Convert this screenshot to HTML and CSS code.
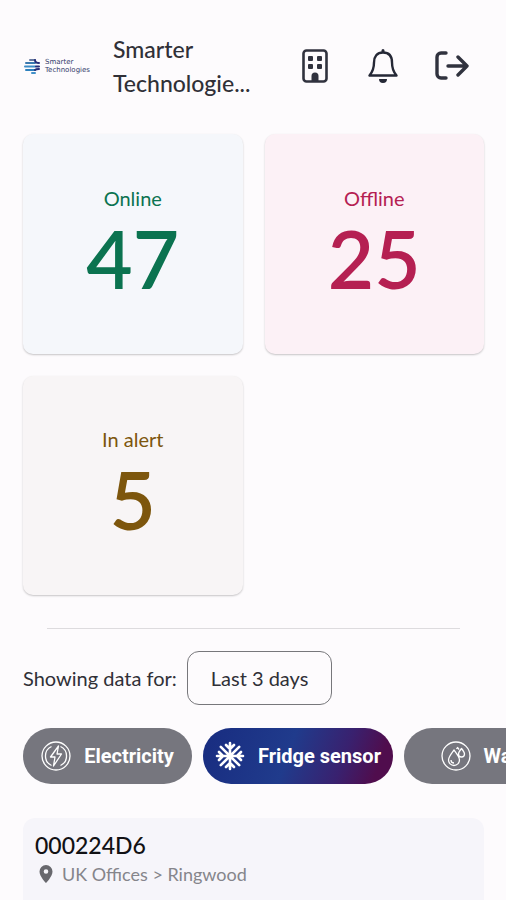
FILE: index.html
```html
<!DOCTYPE html>
<html lang="en">
<head>
<meta charset="utf-8">
<meta name="viewport" content="width=device-width, initial-scale=1">
<title>Smarter Technologies</title>
<link rel="stylesheet" href="styles.css">
</head>
<body>
<header class="topbar">
  <a class="logo" href="#" aria-label="Home">
    <svg class="logo-mark" viewBox="0 0 17 18" aria-hidden="true">
      <g fill="none" stroke-width="2" stroke-linecap="round">
        <path d="M6 3h5" stroke="#66799f"/>
        <path d="M2 6h9" stroke="#3a79ae"/>
        <path d="M1 9.500h10" stroke="#3c8bc5"/>
        <path d="M2 13h9" stroke="#2d80bd"/>
        <path d="M11 3q0 3 4 3M12 9.500h3M11 13q1-1 4-1" stroke="#252d78"/>
        <path d="M8 16h3" stroke="#4290c8"/>
      </g>
    </svg>
    <span class="logo-text">Smarter<br>Technologies</span>
  </a>
  <h1 class="title">Smarter Technologie...</h1>
  <nav class="actions">
    <button class="icon-button" type="button" aria-label="Sites">
      <svg viewBox="0 0 36 36" aria-hidden="true">
        <rect x="6.500" y="2.500" width="23" height="31" rx="3" fill="none" stroke="#30323e" stroke-width="2.600"/>
        <g fill="#30323e"><rect x="11" y="8" width="5" height="5" rx="1"/><rect x="20" y="8" width="5" height="5" rx="1"/><rect x="11" y="16" width="5" height="5" rx="1"/><rect x="20" y="16" width="5" height="5" rx="1"/><path d="M14.500 33v-5a3.500 3.500 0 0 1 7 0v5z"/></g>
      </svg>
    </button>
    <button class="icon-button" type="button" aria-label="Notifications">
      <svg viewBox="0 0 36 36" aria-hidden="true">
        <path d="M18 4.500c-6 0-9 4-9 10 0 6-1 9-4.500 13h27c-3.500-4-4.500-7-4.500-13 0-6-3-10-9-10z" fill="none" stroke="#252836" stroke-width="2.400" stroke-linejoin="round"/>
        <path d="M16.500 4V2.500a1.500 1.500 0 0 1 3 0V4zM14 31h8a4 4 0 0 1-8 0z" fill="#252836"/>
      </svg>
    </button>
    <button class="icon-button" type="button" aria-label="Log out">
      <svg viewBox="0 0 36 36" fill="none" stroke="#30323e" stroke-width="3.400" stroke-linecap="round" stroke-linejoin="round" aria-hidden="true">
        <path d="M13 5H8a4 4 0 0 0-4 4v17a4 4 0 0 0 4 4h5M15 18h19M25 9l9 9-9 9"/>
      </svg>
    </button>
  </nav>
</header>
<main>
  <section class="stats" aria-label="Device status">
    <article class="stat online"><h2>Online</h2><strong>47</strong></article>
    <article class="stat offline"><h2>Offline</h2><strong>25</strong></article>
    <article class="stat alert"><h2>In alert</h2><strong>5</strong></article>
  </section>
  <hr class="divider">
  <div class="period">
    <span id="period-label">Showing data for:</span>
    <button class="period-button" type="button" aria-describedby="period-label">Last 3 days</button>
  </div>
  <div class="chips">
    <button class="chip" type="button">
      <svg viewBox="0 0 30 30" fill="none" stroke="#fff" stroke-width="1.300" stroke-linejoin="round" aria-hidden="true">
        <circle cx="15" cy="15" r="14"/>
        <path d="M10.500 5.500a10.500 10.500 0 0 0 0 19M19.500 5.500a10.500 10.500 0 0 1 0 19M17.500 5 9.500 16h4.500l-1.500 9 8-12h-4.500z"/>
      </svg>
      Electricity
    </button>
    <button class="chip selected" type="button" aria-pressed="true">
      <svg viewBox="0 0 30 30" fill="none" stroke="#fff" stroke-width="2.600" stroke-linecap="round" stroke-linejoin="round" aria-hidden="true">
        <path d="M15 2v26M2 15h26M5.800 5.800l18.400 18.400M24.200 5.800 5.800 24.200M11 4l4 4 4-4M11 26l4-4 4 4M4 11l4 4-4 4M26 11l-4 4 4 4"/>
      </svg>
      Fridge sensor
    </button>
    <button class="chip" type="button">
      <svg viewBox="0 0 30 30" fill="none" stroke="#fff" stroke-width="1.300" stroke-linejoin="round" aria-hidden="true">
        <circle cx="15" cy="15" r="14"/>
        <path d="M13 9c-3 4-5.500 7-5.500 10a5.500 5.500 0 0 0 11 0c0-3-2.500-6-5.500-10zM10 19a3 3 0 0 0 3 3M20.500 7.500c-2 2.500-3 4-3 5.500a3 3 0 0 0 6 0c0-1.500-1-3-3-5.500zM15.500 8l1-1.500 1.500 2"/>
      </svg>
      Water
    </button>
  </div>
  <article class="device">
    <h2>000224D6</h2>
    <p>
      <svg viewBox="0 0 14 20" aria-hidden="true"><path fill="#68686d" fill-rule="evenodd" d="M7 1a6.500 6.500 0 0 0-6.500 6.500C.5 12.500 7 19 7 19s6.500-6.500 6.500-11.500A6.500 6.500 0 0 0 7 1zm0 4.200a2.300 2.300 0 1 1 0 4.600 2.300 2.300 0 0 1 0-4.600z"/></svg>
      UK Offices &gt; Ringwood
    </p>
  </article>
</main>
</body>
</html>
```
FILE: styles.css
```css
* {
  box-sizing: border-box;
}

body {
  display: flex;
  flex-direction: column;
  margin: 0;
  min-height: 100vh;
  overflow-x: hidden;
  background: #fdfbfd;
  color: #303037;
  font-family: Lato, "Liberation Sans", sans-serif;
}

button {
  font: inherit;
  cursor: pointer;
}

h1,
h2,
p {
  margin: 0;
}

.topbar {
  display: flex;
  align-items: center;
  padding: 32px 37px 34px 24px;
}

.logo {
  display: flex;
  flex: none;
  align-items: center;
  gap: 4px;
  width: 89px;
  color: #343b6b;
  text-decoration: none;
}

.logo-mark {
  width: 17px;
  height: 18px;
}

.logo-text {
  font-family: "DejaVu Sans", sans-serif;
  font-size: 7px;
  line-height: 8px;
}

.title {
  flex: 1;
  min-width: 0;
  font-size: 23px;
  font-weight: 500;
  line-height: 34px;
}

.actions {
  display: flex;
  flex: none;
  gap: 32px;
}

.icon-button {
  width: 36px;
  height: 36px;
  padding: 0;
  border: 0;
  background: none;
}

.icon-button svg {
  display: block;
  width: 100%;
}

main {
  display: flex;
  flex: 1;
  flex-direction: column;
  padding: 0 22px 0 23px;
}

.stats {
  display: grid;
  grid-template-columns: 1fr 1fr;
  gap: 22px;
}

.stat {
  display: flex;
  flex-direction: column;
  align-items: center;
  justify-content: center;
  padding-top: 2px;
  aspect-ratio: 1;
  border-radius: 10px;
  box-shadow: 0 1px 2px rgb(0 0 0 / 22%);
}

.stat h2 {
  font-size: 20px;
  font-weight: 400;
  line-height: 26px;
}

.stat strong {
  font-size: 80px;
  font-weight: 600;
  line-height: 94px;
}

.online {
  background: #f5f7fb;
  color: #0b7350;
}

.offline {
  background: #fcf1f6;
  color: #b52052;
}

.alert {
  background: #f8f5f6;
  color: #7d560d;
}

.divider {
  align-self: stretch;
  height: 1px;
  margin: 33px 24px 22px;
  border: 0;
  background: #dddbde;
}

.period {
  display: flex;
  align-items: center;
  gap: 10px;
  font-size: 20px;
}

.period-button {
  height: 54px;
  padding: 0 23px;
  border: 1px solid #77777b;
  border-radius: 12px;
  background: transparent;
  color: inherit;
}

.chips {
  display: flex;
  flex: none;
  gap: 11px;
  margin: 23px -22px 0 0;
  overflow: hidden;
}

.chip {
  display: flex;
  flex: none;
  align-items: center;
  justify-content: center;
  gap: 13px;
  min-width: 169px;
  height: 56px;
  padding: 0 12px;
  border: 0;
  border-radius: 28px;
  background: #76767e;
  color: #fff;
  font-family: Roboto, sans-serif;
  font-size: 20px;
  font-weight: 700;
}

.chip svg {
  flex: none;
  width: 30px;
  height: 30px;
}

.selected {
  background: linear-gradient(110deg, #182c80, #203b8c 45%, #39216f 72%, #500d4d 90%);
}

.device {
  flex: 1;
  margin-top: 34px;
  padding: 12px 12px 10px;
  border-radius: 12px 12px 0 0;
  background: #f6f5fa;
}

.device h2 {
  color: #111114;
  font-size: 23px;
  font-weight: 500;
  line-height: 30px;
}

.device p {
  display: flex;
  align-items: center;
  gap: 9px;
  padding-left: 4px;
  color: #85858b;
  font-size: 18px;
  line-height: 28px;
}

.device svg {
  width: 14px;
  height: 20px;
}
```
